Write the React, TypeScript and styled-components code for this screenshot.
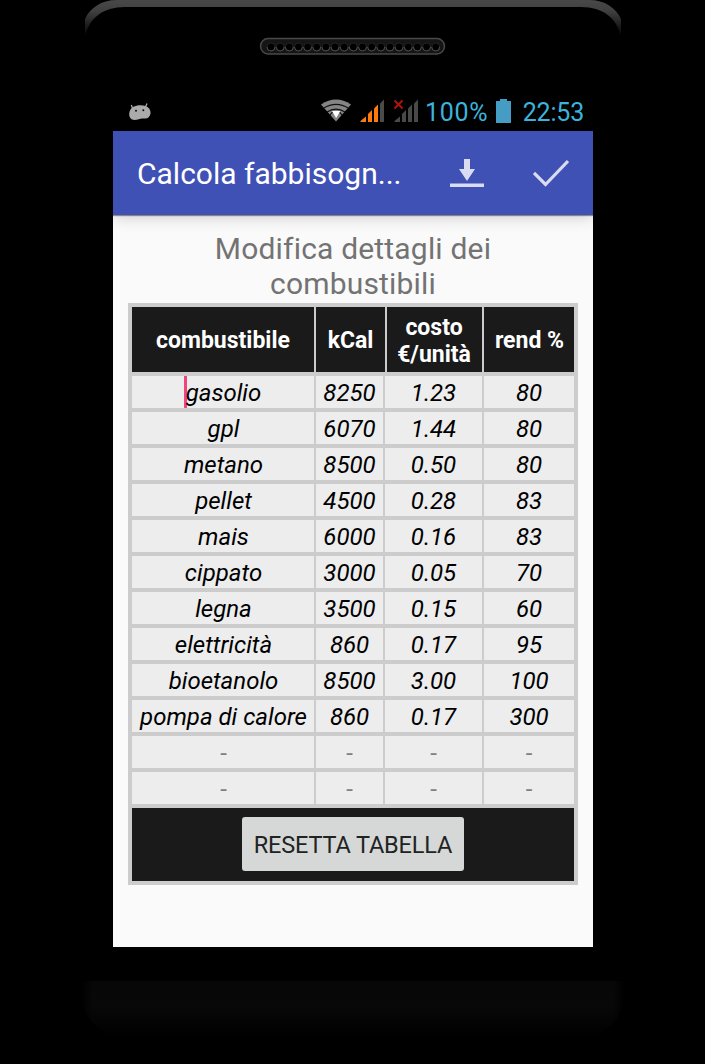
import React from "react";
import styled, { createGlobalStyle } from "styled-components";

const GlobalStyle = createGlobalStyle`
  * { box-sizing: border-box; }
  body { margin: 0; background: #000; font-family: Roboto, "Liberation Sans", sans-serif; }
`;

const Page = styled.main`
  height: 1064px;
  width: 705px;
  overflow: hidden;
  background: #000;
  display: flex;
  flex-direction: column;
  align-items: center;
`;

const DeviceTop = styled.header`
  width: 537px;
  height: 93px;
  flex: none;
  margin-left: 1px;
`;

const Screen = styled.section`
  width: 480px;
  height: 854px;
  flex: none;
  margin-left: 1px;
  display: flex;
  flex-direction: column;
  background: #fafafa;
`;

const StatusBar = styled.div`
  height: 38px;
  background: #000;
  display: flex;
  padding: 0 9px 0 16px;
  color: #3bb4dd;
  font-size: 25px;
  line-height: 40px;
`;

const StatusIcons = styled.svg`
  flex: none;
  display: block;
`;

const Level = styled.span`
  width: 71px;
  margin-left: 6px;
  letter-spacing: 0.7px;
  white-space: nowrap;
`;

const Clock = styled.span`
  margin-left: auto;
  letter-spacing: -0.2px;
  font-size: 25px;
`;

const AppBar = styled.div`
  height: 84px;
  flex: none;
  background: #3f51b5;
  color: #fff;
  display: flex;
  align-items: center;
  padding: 0 24px;
  box-shadow: 0 1px 1px rgba(0, 0, 0, 0.4), 0 3px 14px rgba(0, 0, 0, 0.16);
  clip-path: inset(0 0 -20px 0);
`;

const BarTitle = styled.h1`
  margin: 0;
  flex: 1;
  font-size: 30px;
  font-weight: 400;
  white-space: nowrap;
`;

const BarIcon = styled.svg<{ $gap?: number }>`
  flex: none;
  margin-left: ${(p) => p.$gap ?? 0}px;
`;

const Heading = styled.h2`
  margin: 16px 0 0;
  height: 72px;
  text-align: center;
  font-size: 30px;
  font-weight: 400;
  line-height: 35px;
  letter-spacing: 0.18px;
  color: #737373;
`;

const Table = styled.div`
  width: 450px;
  margin: 0 auto;
  padding: 4px;
  background: #cccccc;
  display: flex;
  flex-direction: column;
  gap: 4px;
`;

const Row = styled.div<{ $head?: boolean }>`
  display: grid;
  grid-template-columns: ${(p) =>
    p.$head ? "182px 69px 95px 90px" : "182px 67px 97px 90px"};
  column-gap: 2px;
  height: ${(p) => (p.$head ? 65 : 32)}px;
`;

const HeadCell = styled.div`
  background: #1a1a1a;
  color: #fff;
  font-size: 23px;
  font-weight: 700;
  line-height: 27px;
  display: flex;
  align-items: center;
  justify-content: center;
  text-align: center;
  padding-top: 2px;

  &:nth-child(3) { padding-right: 1px; }
  &:nth-child(4) { padding-left: 1px; }
`;

const Cell = styled.div<{ $hint?: boolean }>`
  background: #ededed;
  color: ${(p) => (p.$hint ? "#808080" : "#000")};
  font-size: 24px;
  font-style: ${(p) => (p.$hint ? "normal" : "italic")};
  line-height: 34px;
  height: 32px;
  text-align: center;
  white-space: nowrap;

  &:first-child { padding-left: 1px; }
`;

const Caret = styled.span`
  display: inline-block;
  width: 3px;
  height: 32px;
  margin: 0 -1.5px 0 -1.5px;
  background: #f04580;
  vertical-align: top;
`;

const Footer = styled.div`
  height: 73px;
  background: #1a1a1a;
  display: flex;
  align-items: flex-start;
  justify-content: center;
  padding-top: 9px;
`;

const ResetButton = styled.button`
  width: 222px;
  height: 54px;
  padding: 2px 0 0;
  border: 0;
  border-radius: 3px;
  background: #d6d8d7;
  color: #212323;
  font: 400 23.5px Roboto, sans-serif;
  letter-spacing: -0.15px;
  white-space: nowrap;
`;

const DeviceBottom = styled.footer`
  width: 544px;
  height: 56px;
  margin-top: 34px;
  flex: none;
  border-radius: 4px 4px 44px 44px;
  background: linear-gradient(#070707, #080808 45%, #000);
  mask-image: linear-gradient(90deg, transparent, #000 12px, #000 532px, transparent);
`;

const rows = [
  ["gasolio", "8250", "1.23", "80"],
  ["gpl", "6070", "1.44", "80"],
  ["metano", "8500", "0.50", "80"],
  ["pellet", "4500", "0.28", "83"],
  ["mais", "6000", "0.16", "83"],
  ["cippato", "3000", "0.05", "70"],
  ["legna", "3500", "0.15", "60"],
  ["elettricità", "860", "0.17", "95"],
  ["bioetanolo", "8500", "3.00", "100"],
  ["pompa di calore", "860", "0.17", "300"],
  ["-", "-", "-", "-"],
  ["-", "-", "-", "-"],
];

const holes = Array.from({ length: 19 }, (_, i) => 186 + i * 9.15);

function Speaker() {
  return (
    <svg width="537" height="93" viewBox="0 0 537 93">
      <defs>
        <linearGradient id="edge" x1="0" y1="0" x2="0" y2="1">
          <stop offset="0" stopColor="#484848" />
          <stop offset="0.3" stopColor="#404040" />
          <stop offset="0.6" stopColor="#242424" />
          <stop offset="1" stopColor="#000" />
        </linearGradient>
      </defs>
      <path
        d="M0 37 V19 C5 8 16 0 32 0 H504 C520 0 531 8 536 19 V37 C532 18 518 7 496 7 H40 C18 7 4 18 0 37Z"
        fill="url(#edge)"
      />
      <rect x="175.5" y="38.500" width="184" height="15.500" rx="7.700" fill="#151515" stroke="#484848" strokeWidth="1.500" />
      {holes.map((x) => (
        <g key={x}>
          <circle cx={x} cy="47" r="4" fill="#000" stroke="#262626" strokeWidth="0.900" />
          <path d={`M${x - 4} 47 A4 4 0 0 0 ${x + 4} 47`} fill="none" stroke="#505050" strokeWidth="0.900" />
        </g>
      ))}
    </svg>
  );
}

function StatusGlyphs() {
  return (
    <StatusIcons width="290" height="38" viewBox="129 93 290 38">
      <path
        d="M131.300 105 L132.500 108 M147 103.500 L145.500 107"
        stroke="#aaa"
        strokeWidth="1.300"
        fill="none"
      />
      <path
        d="M133 107 C137 104.800 142 104.800 145.500 106 C149.500 107.500 150.800 110.500 150.500 113.500 C150 117 147.500 119 144 118.500 C142 118.200 140 118.800 138 119.500 C134.500 120.500 130.500 120 129.500 116.500 C128.500 112.500 130 109 133 107Z"
        fill="#ababab"
      />
      <circle cx="136" cy="110.800" r="1" fill="#111" />
      <circle cx="143.300" cy="110.300" r="1" fill="#111" />
      <path d="M321 104.500 Q336 94.500 351 104.500 L336 121.500Z" fill="#858585" />
      <g fill="none" stroke="#111" strokeWidth="1.100">
        <path d="M323.500 108.200 Q336 100.500 348.500 108.200" />
        <path d="M327 112 Q336 106.300 345 112" />
        <path d="M330 115.300 Q331 113.500 332.500 112" />
        <path d="M342 115.300 Q341 113.500 339.500 112" />
      </g>
      <path d="M332 111 H340.300 L336.200 118Z" fill="#fff" />
      <g fill="#ff7b0d">
        <path d="M360.500 122 V121 L366 116.500 V122Z" />
        <path d="M368 122 V114 L372 110 V122Z" />
        <path d="M374 122 V108.500 L378 104.500 V122Z" />
      </g>
      <path d="M380 122 V103.500 L384 99.500 V122Z" fill="#4b4b48" />
      <g fill="#494949">
        <path d="M394.500 122 V121 L400 116.500 V122Z" />
        <path d="M402 122 V114 L406 110 V122Z" />
        <path d="M408 122 V108.500 L412 104.500 V122Z" />
        <path d="M414 122 V103.500 L418 99.500 V122Z" />
      </g>
      <path d="M394.500 100.500 L402.500 108.500 M402.500 100.500 L394.500 108.500" stroke="#b51208" strokeWidth="1.800" />
    </StatusIcons>
  );
}

export default function App() {
  return (
    <Page>
      <GlobalStyle />
      <DeviceTop>
        <Speaker />
      </DeviceTop>
      <Screen>
        <StatusBar>
          <StatusGlyphs />
          <Level>100%</Level>
          <StatusIcons width="16" height="38" viewBox="0 0 16 38">
            <path d="M0 8 H4 V6 H11 V8 H15 V30 H0Z" fill="#459cc4" />
          </StatusIcons>
          <Clock>22:53</Clock>
        </StatusBar>
        <AppBar>
          <BarTitle>Calcola fabbisogn...</BarTitle>
          <BarIcon width="34" height="30" viewBox="0 0 34 30">
            <path d="M14 1 H20 V11 H25 L17 23 L9 11 H14Z M0 25.500 H34 V29 H0Z" fill="#d9dcf0" />
          </BarIcon>
          <BarIcon $gap={49} width="36" height="30" viewBox="0 0 36 30">
            <path d="M1 15 L12.500 26.500 L35 3" fill="none" stroke="#d9dcf0" strokeWidth="3.200" />
          </BarIcon>
        </AppBar>
        <Heading>
          Modifica dettagli dei
          <br />
          combustibili
        </Heading>
        <Table>
          <Row $head>
            <HeadCell>combustibile</HeadCell>
            <HeadCell>kCal</HeadCell>
            <HeadCell>
              costo
              <br />
              €/unità
            </HeadCell>
            <HeadCell>rend %</HeadCell>
          </Row>
          {rows.map((row, r) => (
            <Row key={r}>
              {row.map((value, c) => (
                <Cell key={c} $hint={value === "-"}>
                  {r === 0 && c === 0 && <Caret />}
                  {value}
                </Cell>
              ))}
            </Row>
          ))}
          <Footer>
            <ResetButton>RESETTA TABELLA</ResetButton>
          </Footer>
        </Table>
      </Screen>
      <DeviceBottom />
    </Page>
  );
}
